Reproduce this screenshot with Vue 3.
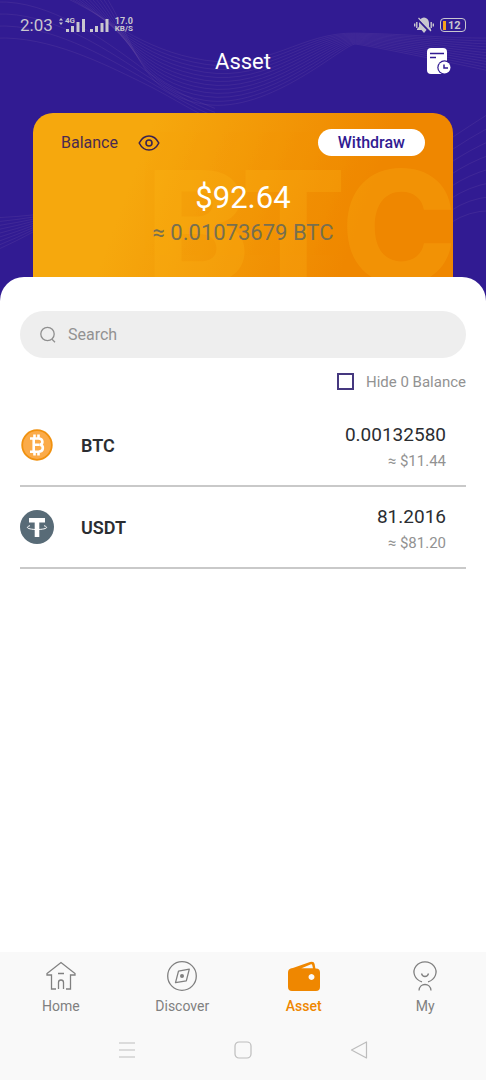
<script setup>
import { computed, ref } from 'vue'

const query = ref('')
const hideZero = ref(false)
const balanceShown = ref(true)

const assets = [
  { symbol: 'BTC', amount: '0.00132580', value: '$11.44' },
  { symbol: 'USDT', amount: '81.2016', value: '$81.20' },
]

const visibleAssets = computed(() =>
  assets.filter(
    (a) =>
      a.symbol.toLowerCase().includes(query.value.trim().toLowerCase()) &&
      (!hideZero.value || Number(a.amount) > 0),
  ),
)

const range = (n) => Array.from({ length: n }, (_, i) => i)

const waves = [
  ...range(12).map(
    (i) =>
      `M${62 + i * 4} -4 C${105 + i * 3} ${14 + i * 3} 140 ${50 + i * 4} 205 ${60 + i * 4} S${300 + i * 4} ${32 + i} 355 ${33 + i} S440 ${38 + i * 2} 490 ${38 + i * 3}`,
  ),
  ...range(4).map(
    (i) => `M-2 ${2 + i * 12} C50 ${i * 12} 105 ${40 + i * 8} 140 ${66 + i * 5} S190 ${98 + i * 4} 215 ${108 + i * 4}`,
  ),
  ...range(8).map((i) => `M450 ${138 + i * 12} Q468 ${126 + i * 12} 490 ${112 + i * 14}`),
  ...range(9).map((i) => `M-2 ${217 + i * 4} Q18 ${216 + i * 3} 36 ${214 + i * 2}`),
]
</script>

<template>
  <div class="page">
    <header class="hero">
      <svg class="waves" viewBox="0 0 486 300" preserveAspectRatio="xMidYMin slice" aria-hidden="true">
        <path v-for="d in waves" :key="d" :d="d" />
      </svg>

      <div class="status">
        <div class="status-group">
          <span class="time">2:03</span>
          <svg class="signals" width="50" height="18" viewBox="0 0 50 18" aria-hidden="true">
            <path d="M0 4.500 2 2l2 2.500zM0 6.500 2 9l2-2.500z" />
            <text x="6" y="7">4G</text>
            <path d="M7 13h3v3H7zM12 10h3v6h-3zM17.500 6h3v10h-3zM23 3h3v13h-3zM31 13h3v3h-3zM36 10h3v6h-3zM41.500 7h3v9h-3zM46.500 3h3v13h-3z" />
          </svg>
          <span class="speed"><span>17.0</span><span>KB/S</span></span>
        </div>
        <div class="status-group">
          <svg width="20" height="18" viewBox="0 0 20 18" aria-hidden="true">
            <path d="M10 1.500c-3.500.4-5 2.800-5 6v3.200L3 13v1h14v-1L15 10.700V7.500c0-3.200-1.500-5.600-5-6zM7.500 14h5L10 17z" fill="#c9c7cf" />
            <path d="M.7 7.500v3M2.800 6v6M17.200 6v6M19.300 7.500v3" stroke="#c9c7cf" stroke-width="1.400" />
            <path d="M3 2.500 16 16" stroke="#311b92" stroke-width="2" />
            <path d="M4.500 2 17 15" stroke="#c9c7cf" stroke-width="1.200" />
          </svg>
          <span class="battery"><i></i>12</span>
        </div>
      </div>

      <div class="titlebar">
        <h1>Asset</h1>
        <button type="button" class="plain" aria-label="Asset history">
          <svg width="26" height="28" viewBox="0 0 26 28" aria-hidden="true">
            <rect x="1" y="1" width="20" height="26" rx="4" fill="#fff" />
            <path d="M4 6.500h14M4 10.500h6" stroke="#311b92" stroke-width="1.500" />
            <circle cx="18.500" cy="20.500" r="7.200" fill="#311b92" />
            <circle cx="18.500" cy="20.500" r="6" fill="#fff" />
            <path d="M18 17.500V21h4" fill="none" stroke="#311b92" stroke-width="1.500" />
          </svg>
        </button>
      </div>

      <section class="card" aria-label="Balance">
        <span class="watermark" aria-hidden="true">BTC</span>
        <div class="card-top">
          <span class="label">Balance</span>
          <button type="button" class="plain eye" aria-label="Toggle balance" @click="balanceShown = !balanceShown">
            <svg width="22" height="18" viewBox="0 0 22 18" fill="none" stroke="#3b2250" stroke-width="1.600" aria-hidden="true">
              <path d="M1.200 9C3.500 4.500 7 2 11 2s7.500 2.500 9.800 7c-2.300 4.500-5.800 7-9.800 7S3.500 13.500 1.200 9z" stroke-linejoin="round" />
              <circle cx="11" cy="9" r="3" />
            </svg>
          </button>
          <button type="button" class="withdraw">Withdraw</button>
        </div>
        <p class="total">{{ balanceShown ? '$92.64' : '****' }}</p>
        <p class="approx">≈ {{ balanceShown ? '0.01073679' : '****' }} BTC</p>
      </section>
    </header>

    <main class="sheet">
      <label class="search">
        <svg width="18" height="18" viewBox="0 0 18 18" fill="none" stroke="#8f8f8f" stroke-width="1.300" aria-hidden="true">
          <circle cx="7.500" cy="8" r="6.700" />
          <path d="m12 13.200 3 3" />
        </svg>
        <input v-model="query" type="text" placeholder="Search" aria-label="Search" />
      </label>

      <label class="hide-zero">
        <input v-model="hideZero" type="checkbox" />
        <span>Hide 0 Balance</span>
      </label>

      <ul class="assets">
        <li v-for="a in visibleAssets" :key="a.symbol">
          <svg v-if="a.symbol === 'BTC'" width="34" height="34" viewBox="0 0 34 34" aria-hidden="true">
            <circle cx="17" cy="17" r="14.800" fill="#fbab49" stroke="#f0910f" stroke-width="1.800" />
            <path d="M10 10.500h8.500c5 0 4.800 5.500 1.500 6.200 4.200.8 3.800 7-1.500 7H10M13.700 10.500v13M13.700 16.800h5.800M14.500 6.500v4M18.500 6.500v4M14.500 23.500v4M18.500 23.500v4" fill="none" stroke="#fff" stroke-width="2.600" />
          </svg>
          <svg v-else width="34" height="34" viewBox="0 0 34 34" aria-hidden="true">
            <circle cx="17" cy="17" r="17" fill="#586b77" />
            <path d="M9 8h16v4.500h-5.700V27h-4.600V12.500H9z" fill="#fff" />
            <path d="M10 15.700c-6 1.800-1 3.800 7 3.800s13-2 7-3.800" fill="none" stroke="#fff" stroke-width="1" />
          </svg>
          <strong>{{ a.symbol }}</strong>
          <div class="figures">
            <span class="amount">{{ a.amount }}</span>
            <span class="value">≈ {{ a.value }}</span>
          </div>
        </li>
      </ul>
    </main>

    <footer class="bottom">
      <nav class="tabs">
        <a href="#home">
          <svg width="32" height="32" viewBox="0 0 32 32" aria-hidden="true">
            <path d="M11 29H6.500V15H2v-1.500L16 2.500l14 11V15h-4.500v14H21M13.500 29v-6.500q0-2.500 2.500-2.500t2.500 2.500V29M13 13.500h6" />
          </svg>
          <span>Home</span>
        </a>
        <a href="#discover">
          <svg width="32" height="32" viewBox="0 0 32 32" aria-hidden="true">
            <circle cx="16" cy="16" r="14.300" />
            <path d="m12.500 11.200 10.800-2-3 11.600L9.500 22.600z" stroke-linejoin="round" />
            <circle cx="16" cy="16" r="2" class="solid" />
          </svg>
          <span>Discover</span>
        </a>
        <a href="#asset" class="active" aria-current="page">
          <svg width="32" height="32" viewBox="0 0 32 32" aria-hidden="true">
            <path class="solid" fill-rule="evenodd" d="M2 9 22 2q4-1.200 4.600 2l.9 5zM13 8.500h12L24.200 5q-.2-1-1.200-.7z" />
            <path class="solid" fill-rule="evenodd" d="M4 8.500h24q4 0 4 4V27q0 4-4 4H4q-4 0-4-4V12.500q0-4 4-4zm19.500 5.500a3 3 0 1 0 .01 0z" />
          </svg>
          <span>Asset</span>
        </a>
        <a href="#my">
          <svg width="32" height="32" viewBox="0 0 32 32" aria-hidden="true">
            <path d="M13 21.800a11 10.200 0 1 1 6 0M12.500 13.500c1 4 6 4 7 0M10 30.500c.5-8 11.500-8 12 0" />
          </svg>
          <span>My</span>
        </a>
      </nav>
      <div class="system">
        <button type="button" class="plain" aria-label="Recent apps">
          <svg width="18" height="18" viewBox="0 0 18 18" aria-hidden="true"><path d="M1 2h16M1 9h16M1 16h16" /></svg>
        </button>
        <button type="button" class="plain" aria-label="Home screen">
          <svg width="18" height="18" viewBox="0 0 18 18" aria-hidden="true"><rect x="1" y="1" width="16" height="16" rx="4" /></svg>
        </button>
        <button type="button" class="plain" aria-label="Back">
          <svg width="18" height="18" viewBox="0 0 18 18" aria-hidden="true"><path d="M16.500 1v16L1.500 9z" stroke-linejoin="round" /></svg>
        </button>
      </div>
    </footer>
  </div>
</template>

<style>
body {
  margin: 0;
  background: #fff;
}
</style>

<style scoped>
.page {
  display: flex;
  flex-direction: column;
  min-height: 100vh;
  font-family: Roboto, "Liberation Sans", sans-serif;
  color: #2b2d31;
}
.page * {
  box-sizing: border-box;
}
.plain {
  display: flex;
  padding: 0;
  border: 0;
  background: none;
  cursor: pointer;
}
.hero {
  position: relative;
  overflow: hidden;
  padding: 13px 20px 0;
  background: #311b92;
}
.waves {
  position: absolute;
  inset: 0;
  width: 100%;
  height: 100%;
  fill: none;
  stroke: #6a50a4;
  stroke-opacity: 0.32;
  stroke-width: 0.8;
}
.status,
.status-group {
  position: relative;
  display: flex;
  align-items: center;
}
.status {
  justify-content: space-between;
  height: 24px;
  color: #c9c7cf;
}
.status-group {
  gap: 6px;
}
.time {
  font-size: 17px;
}
.signals {
  fill: #c9c7cf;
  font-size: 8px;
  font-weight: 700;
}
.speed {
  display: flex;
  flex-direction: column;
  font-size: 8px;
  font-weight: 700;
  line-height: 8px;
}
.speed span:first-child {
  font-size: 9px;
}
.battery {
  display: flex;
  align-items: center;
  gap: 2px;
  width: 26px;
  height: 14px;
  padding: 0 2px;
  border: 1px solid #c9c7cf;
  border-radius: 4px;
  font-size: 11px;
  font-weight: 700;
}
.battery i {
  width: 3px;
  height: 9px;
  background: #f5a11c;
}
.titlebar {
  position: relative;
  display: grid;
  grid-template-columns: 1fr auto 1fr;
  align-items: center;
  height: 48px;
  padding-right: 14px;
  padding-left: 14px;
}
h1 {
  grid-column: 2;
  margin: 0;
  font-size: 22px;
  font-weight: 400;
  color: #fff;
}
.titlebar button {
  justify-self: end;
}
.card {
  position: relative;
  overflow: hidden;
  margin: 28px 13px 0;
  padding: 16px 28px 53px;
  border-radius: 20px 20px 0 0;
  background: linear-gradient(110deg, #f6a80d 25%, #ef8700 75%);
  text-align: center;
}
.watermark {
  position: absolute;
  top: 36px;
  right: -4px;
  font-family: Inter, sans-serif;
  font-size: 156px;
  font-weight: 800;
  line-height: 156px;
  color: #ffba1a;
  opacity: 0.22;
}
.card-top {
  position: relative;
  display: flex;
  align-items: center;
  height: 27px;
}
.label {
  font-size: 16px;
  color: #4a2a50;
}
.eye {
  margin-left: 20px;
}
.withdraw {
  height: 27px;
  margin-left: auto;
  padding: 0 20px;
  border: 0;
  border-radius: 14px;
  background: #fff;
  font: 500 16px Roboto, sans-serif;
  color: #311b92;
}
.total,
.approx {
  position: relative;
  margin: 0;
}
.total {
  margin-top: 22px;
  font-size: 31px;
  line-height: 40px;
  color: #fff;
}
.approx {
  font-size: 22px;
  line-height: 30px;
  color: #776f50;
}
.sheet {
  position: relative;
  flex: 1;
  margin-top: -24px;
  padding: 34px 20px 0;
  border-radius: 24px 24px 0 0;
  background: #fff;
}
.search {
  display: flex;
  align-items: center;
  gap: 10px;
  height: 47px;
  padding: 0 20px;
  border-radius: 24px;
  background: #eee;
}
.search input {
  flex: 1;
  min-width: 0;
  padding: 0;
  border: 0;
  outline: 0;
  background: none;
  font: 16px Roboto, sans-serif;
  color: #2b2d31;
}
.search input::placeholder {
  color: #929292;
  opacity: 1;
}
.hide-zero {
  display: flex;
  justify-content: flex-end;
  align-items: center;
  gap: 12px;
  height: 47px;
  font-size: 15px;
  color: #929292;
}
.hide-zero input {
  appearance: none;
  width: 17px;
  height: 17px;
  margin: 0;
  border: 2px solid #45387f;
}
.hide-zero input:checked {
  background: #45387f;
}
.assets {
  margin: 0;
  padding: 0;
  list-style: none;
}
.assets li {
  display: flex;
  align-items: center;
  height: 82px;
  padding-right: 20px;
  border-bottom: 2px solid #c9c9c9;
}
.assets strong {
  margin-left: 27px;
  font-size: 18px;
  font-weight: 600;
}
.figures {
  display: flex;
  flex-direction: column;
  margin-left: auto;
  padding-top: 6px;
  text-align: right;
}
.amount {
  font-size: 19px;
  line-height: 26px;
}
.value {
  font-size: 15px;
  line-height: 26px;
  color: #929292;
}
.bottom {
  padding-top: 8px;
  background: #f9f9f9;
}
.tabs {
  display: grid;
  grid-template-columns: repeat(4, 1fr);
}
.tabs a {
  display: flex;
  flex-direction: column;
  align-items: center;
  gap: 4px;
  font-size: 14px;
  line-height: 20px;
  text-decoration: none;
  color: #808080;
}
.tabs svg {
  fill: none;
  stroke: currentColor;
  stroke-width: 1.3;
}
.tabs .solid {
  fill: currentColor;
  stroke: none;
}
.tabs .active {
  font-weight: 500;
  color: #ef8700;
}
.system {
  display: flex;
  justify-content: center;
  align-items: center;
  gap: 98px;
  height: 64px;
  padding-top: 4px;
}
.system svg {
  fill: none;
  stroke: #bdbdbd;
  stroke-width: 1.2;
}
</style>
